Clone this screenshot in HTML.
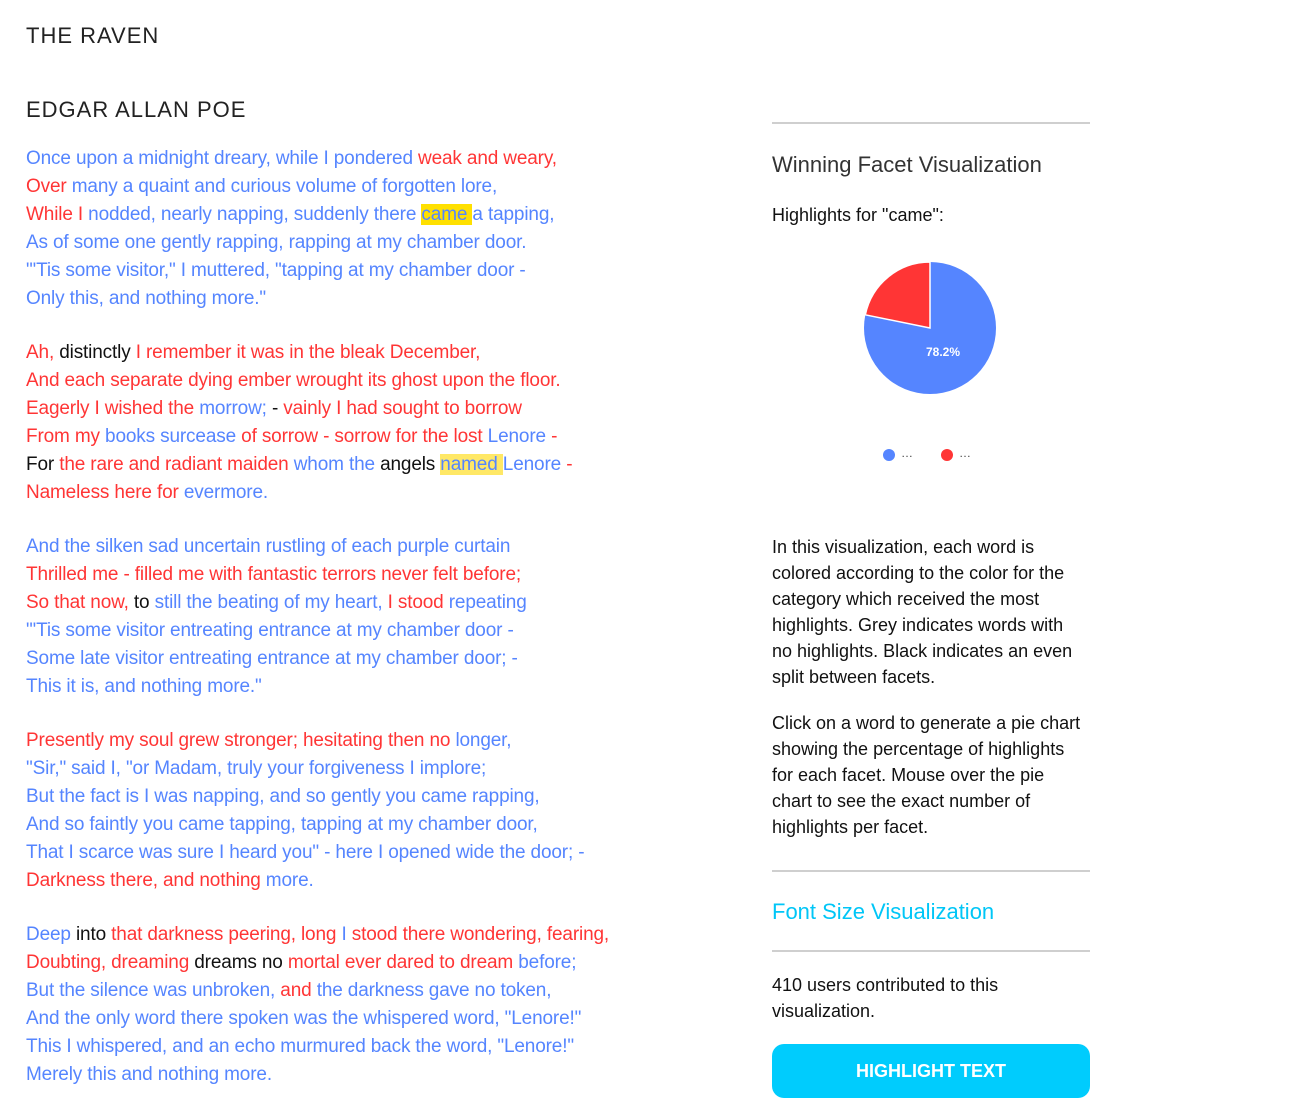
<!DOCTYPE html>
<html><head><meta charset="utf-8"><style>
body{margin:0;background:#fff;width:1298px;height:1110px;overflow:hidden;position:relative;font-family:"Liberation Sans",sans-serif}
.h{position:absolute;left:26px;font-size:22px;letter-spacing:1px;color:#222;font-weight:normal;line-height:28px}
.poem{position:absolute;left:26px;font-size:19px;line-height:28px;white-space:nowrap;letter-spacing:-0.15px}
.b{color:#5585ff}.r{color:#ff3535}.k{color:#111}
.hl{background:#ffe000}.hl2{background:#ffe866}
.rc{position:absolute;left:772px;width:330px;color:#111;white-space:nowrap}
hr{position:absolute;left:772px;width:318px;border:0;border-top:2px solid #cfcfcf;margin:0}
</style></head><body>
<div class="h" style="top:22px">THE RAVEN</div>
<div class="h" style="top:96px">EDGAR ALLAN POE</div>

<div class="poem" style="top:145px">
<div><span class="b">Once upon a midnight dreary, while I pondered</span> <span class="r">weak and weary,</span></div>
<div><span class="r">Over</span> <span class="b">many a quaint and curious volume of forgotten lore,</span></div>
<div><span class="r">While I</span> <span class="b">nodded, nearly napping, suddenly there <span class="hl">came </span>a tapping,</span></div>
<div class="b">As of some one gently rapping, rapping at my chamber door.</div>
<div class="b">"'Tis some visitor," I muttered, "tapping at my chamber door -</div>
<div class="b">Only this, and nothing more."</div>
</div>

<div class="poem" style="top:339px">
<div><span class="r">Ah,</span> <span class="k">distinctly</span> <span class="r">I remember it was in the bleak December,</span></div>
<div class="r">And each separate dying ember wrought its ghost upon the floor.</div>
<div><span class="r">Eagerly I wished the</span> <span class="b">morrow;</span> <span class="k">-</span> <span class="r">vainly I had sought to borrow</span></div>
<div><span class="r">From my</span> <span class="b">books surcease</span> <span class="r">of sorrow - sorrow for the lost</span> <span class="b">Lenore</span> <span class="r">-</span></div>
<div><span class="k">For</span> <span class="r">the rare and radiant maiden</span> <span class="b">whom the</span> <span class="k">angels</span> <span class="b"><span class="hl2">named </span>Lenore</span> <span class="r">-</span></div>
<div><span class="r">Nameless here for</span> <span class="b">evermore.</span></div>
</div>

<div class="poem" style="top:533px">
<div class="b">And the silken sad uncertain rustling of each purple curtain</div>
<div class="r">Thrilled me - filled me with fantastic terrors never felt before;</div>
<div><span class="r">So that now,</span> <span class="k">to</span> <span class="b">still the beating of my heart,</span> <span class="r">I stood</span> <span class="b">repeating</span></div>
<div class="b">"'Tis some visitor entreating entrance at my chamber door -</div>
<div class="b">Some late visitor entreating entrance at my chamber door; -</div>
<div class="b">This it is, and nothing more."</div>
</div>

<div class="poem" style="top:727px">
<div><span class="r">Presently my soul grew stronger; hesitating then no</span> <span class="b">longer,</span></div>
<div class="b">"Sir," said I, "or Madam, truly your forgiveness I implore;</div>
<div class="b">But the fact is I was napping, and so gently you came rapping,</div>
<div class="b">And so faintly you came tapping, tapping at my chamber door,</div>
<div class="b">That I scarce was sure I heard you" - here I opened wide the door; -</div>
<div><span class="r">Darkness there, and nothing</span> <span class="b">more.</span></div>
</div>

<div class="poem" style="top:921px">
<div><span class="b">Deep</span> <span class="k">into</span> <span class="r">that darkness peering, long</span> <span class="b">I</span> <span class="r">stood there wondering, fearing,</span></div>
<div><span class="r">Doubting, dreaming</span> <span class="k">dreams no</span> <span class="r">mortal ever dared to dream</span> <span class="b">before;</span></div>
<div><span class="b">But the silence was unbroken,</span> <span class="r">and</span> <span class="b">the darkness gave no token,</span></div>
<div class="b">And the only word there spoken was the whispered word, "Lenore!"</div>
<div class="b">This I whispered, and an echo murmured back the word, "Lenore!"</div>
<div class="b">Merely this and nothing more.</div>
</div>

<hr style="top:122px">
<div class="rc" style="top:151px;font-size:22px;color:#333;line-height:28px">Winning Facet Visualization</div>
<div class="rc" style="top:203px;font-size:18px;line-height:24px">Highlights for "came":</div>
<svg style="position:absolute;left:860px;top:258px" width="142" height="142" viewBox="860 258 142 142">
<circle cx="930" cy="328" r="66" fill="#5585ff"/>
<path d="M930 328 L865.3 314.8 A66 66 0 0 1 930 262 Z" fill="#ff3535" stroke="#fff" stroke-width="1.5"/>
<text x="943" y="356" font-family="Liberation Sans,sans-serif" font-size="12" font-weight="bold" fill="#fff" text-anchor="middle">78.2%</text>
</svg>
<div style="position:absolute;left:883px;top:449px;width:12px;height:12px;border-radius:50%;background:#5585ff"></div>
<div style="position:absolute;left:901px;top:446px;font-size:12px;color:#444">…</div>
<div style="position:absolute;left:941px;top:449px;width:12px;height:12px;border-radius:50%;background:#ff3535"></div>
<div style="position:absolute;left:959px;top:446px;font-size:12px;color:#444">…</div>

<div class="rc" style="top:534px;font-size:18px;line-height:26px">In this visualization, each word is<br>colored according to the color for the<br>category which received the most<br>highlights. Grey indicates words with<br>no highlights. Black indicates an even<br>split between facets.</div>
<div class="rc" style="top:710px;font-size:18px;line-height:26px">Click on a word to generate a pie chart<br>showing the percentage of highlights<br>for each facet. Mouse over the pie<br>chart to see the exact number of<br>highlights per facet.</div>
<hr style="top:870px">
<div class="rc" style="top:897px;font-size:22px;color:#00c6f7;line-height:30px">Font Size Visualization</div>
<hr style="top:950px">
<div class="rc" style="top:972px;font-size:18px;line-height:26px">410 users contributed to this<br>visualization.</div>
<div style="position:absolute;left:772px;top:1044px;width:318px;height:54px;border-radius:12px;background:#00ccfd;color:#fff;font-size:18px;font-weight:bold;text-align:center;line-height:54px">HIGHLIGHT TEXT</div>
</body></html>
